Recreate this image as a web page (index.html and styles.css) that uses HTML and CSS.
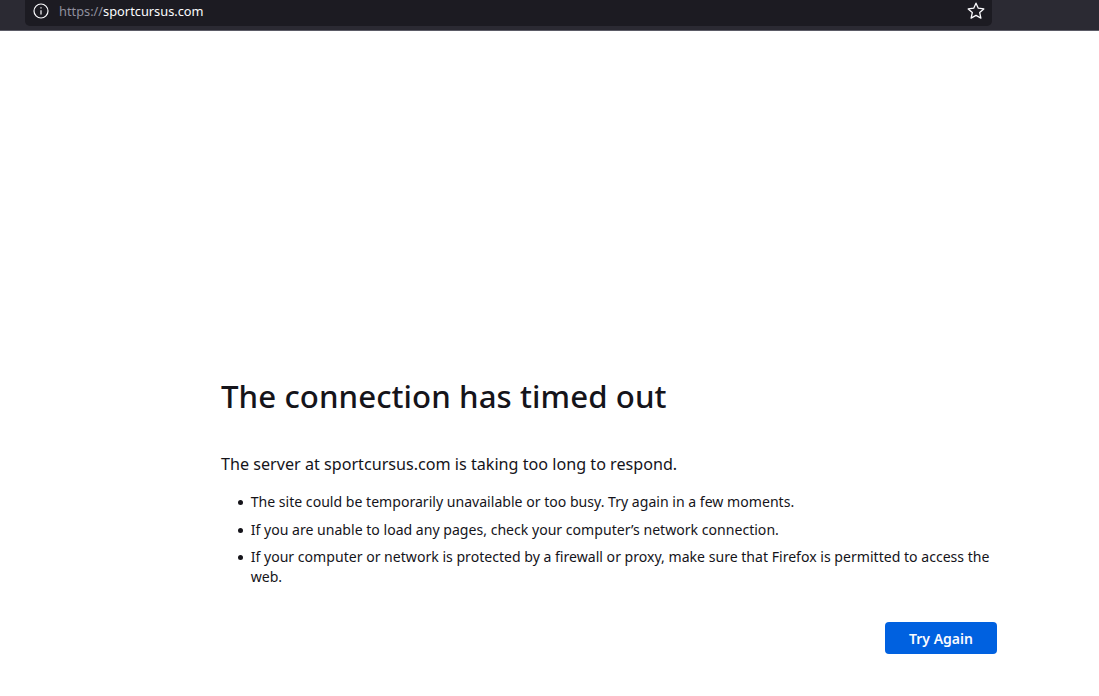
FILE: index.html
```html
<!DOCTYPE html>
<html lang="en">
<head>
<meta charset="utf-8">
<title>Server Not Found</title>
<link rel="stylesheet" href="styles.css">
</head>
<body>
<header class="toolbar">
  <div class="urlbar">
    <svg class="icon-info" width="16" height="16" viewBox="0 0 16 16" fill="none" stroke="#fbfbfe" stroke-width="1.2"><circle cx="8" cy="8" r="7"/><path d="M8 7.2v4.2M8 4.2v1.4"/></svg>
    <div class="url"><span class="scheme">https://</span>sportcursus.com</div>
    <svg class="icon-star" width="18" height="18" viewBox="0 0 18 18" fill="none" stroke="#fbfbfe" stroke-width="1.3" stroke-linejoin="round"><path d="M9 1.2l2.3 5 5.5.7-4.1 3.7 1.2 5.5L9 13.4l-4.9 2.7 1.2-5.5L1.2 6.9l5.5-.7z"/></svg>
  </div>
</header>
<main class="container">
  <h1 class="title">The connection has timed out</h1>
  <p class="intro">The server at sportcursus.com is taking too long to respond.</p>
  <ul class="tips">
    <li>The site could be temporarily unavailable or too busy. Try again in a few moments.</li>
    <li>If you are unable to load any pages, check your computer’s network connection.</li>
    <li>If your computer or network is protected by a firewall or proxy, make sure that Firefox is permitted to access the web.</li>
  </ul>
  <div class="actions"><button class="retry">Try Again</button></div>
</main>
</body>
</html>
```
FILE: styles.css
```css
* { box-sizing: border-box; }
html, body { margin: 0; height: 100%; }
body { background: #fff; font-family: "Noto Sans", "Open Sans", sans-serif; color: #15141a; overflow: hidden; }
.toolbar { height: 31px; background: #2b2a33; border-bottom: 1px solid #5b5b66; padding-left: 25px; padding-right: 107px; }
.urlbar { height: 26px; background: #1c1b22; border-radius: 0 0 5px 5px; display: flex; align-items: center; padding: 0 7px 4px 8px; }
.icon-info { flex: none; margin: 0 0 1px -0.5px; }
.url { flex: 1; margin-left: 10.5px; font-size: 12.8px; color: #fbfbfe; }
.scheme { color: #8f8f9d; }
.icon-star { flex: none; margin-bottom: 1px; }
.container { width: 776px; margin-left: 221px; padding-top: 345px; }
.title { margin: 0; font-size: 31.2px; line-height: 40px; font-weight: 500; letter-spacing: 0.08px; }
.intro { margin: 36px 0 0; font-size: 16.15px; line-height: 24px; }
.tips { list-style: none; margin: 16px 0 0; padding-left: 29.7px; font-size: 14.08px; line-height: 20px; }
.tips li { position: relative; margin-bottom: 7.5px; }
.tips li::before { content: ""; position: absolute; left: -13px; top: 8px; width: 5px; height: 5px; border-radius: 50%; background: #15141a; }
.actions { display: flex; justify-content: flex-end; margin-top: 35px; }
.retry { width: 112px; height: 32px; border: 0; border-radius: 4px; background: #0061e0; color: #fbfbfe; font: 600 14px "Noto Sans", sans-serif; }
```
